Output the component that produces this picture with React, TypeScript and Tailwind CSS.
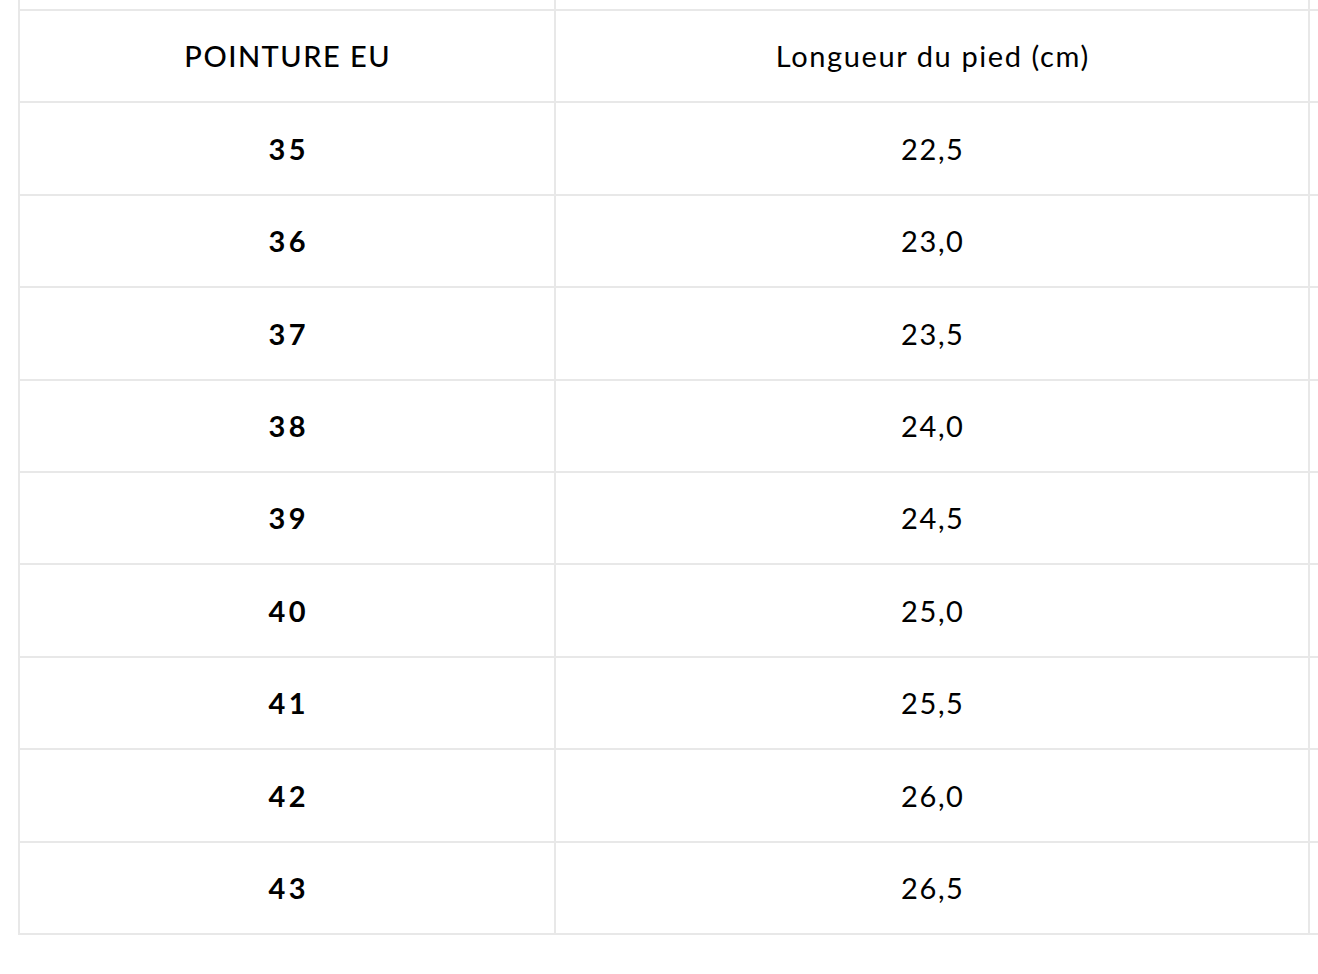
const rows: [string, string][] = [
  ["35", "22,5"],
  ["36", "23,0"],
  ["37", "23,5"],
  ["38", "24,0"],
  ["39", "24,5"],
  ["40", "25,0"],
  ["41", "25,5"],
  ["42", "26,0"],
  ["43", "26,5"],
];

function Row({
  left,
  right,
  head,
}: {
  left: string;
  right: string;
  head?: boolean;
}) {
  return (
    <div className="flex h-[92.4px] border-b-2 border-[#e8e8e8]">
      <div
        className={`flex w-[536px] shrink-0 items-center justify-center border-r-2 border-[#e8e8e8] text-[29px] text-black ${
          head
            ? "pl-[1.5px] font-medium tracking-[1.5px]"
            : "pl-[3.5px] font-bold tracking-[3.5px]"
        }`}
      >
        {left}
      </div>
      <div className="flex w-[754px] shrink-0 items-center justify-center border-r-2 border-[#e8e8e8] pl-[1.6px] text-[29px] tracking-[1.6px] text-black">
        {right}
      </div>
      <div className="w-[200px] shrink-0" />
    </div>
  );
}

export default function App() {
  return (
    <div
      className="h-[974px] w-[1318px] overflow-hidden bg-white pl-[18px]"
      style={{ fontFamily: "Lato, 'Liberation Sans', sans-serif" }}
    >
      <div className="w-[1500px] border-l-2 border-[#e8e8e8]">
        {/* row cut off above */}
        <div className="flex h-[11px] border-b-2 border-[#e8e8e8]">
          <div className="w-[536px] shrink-0 border-r-2 border-[#e8e8e8]" />
          <div className="w-[754px] shrink-0 border-r-2 border-[#e8e8e8]" />
        </div>
        <Row left="POINTURE EU" right="Longueur du pied (cm)" head />
        {rows.map(([l, r]) => (
          <Row key={l} left={l} right={r} />
        ))}
      </div>
    </div>
  );
}
